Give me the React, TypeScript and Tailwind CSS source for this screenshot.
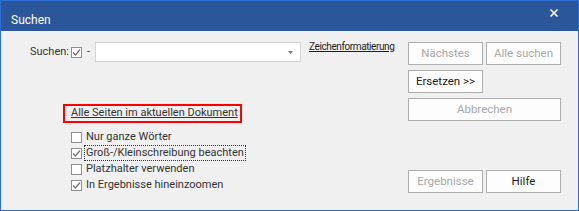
import React from "react";

const font = { fontFamily: 'Roboto, "Segoe UI", sans-serif' };

function Box({ checked }: { checked?: boolean }) {
  return (
    <span className="w-[11px] h-[11px] border border-[#8f8f8f] bg-white flex items-center justify-center shrink-0">
      {checked && (
        <svg width="9" height="9" viewBox="0 0 9 9">
          <path d="M1 4.5 L3.5 7 L8 1.5" fill="none" stroke="#707070" strokeWidth="1.2" />
        </svg>
      )}
    </span>
  );
}

function Btn({ label, disabled, wide }: { label: string; disabled?: boolean; wide?: boolean }) {
  return (
    <button
      className={`h-[23px] ${wide ? "w-[153px]" : "w-[75px]"} border border-[#adadad] bg-[#fdfdfd] text-[11.5px] whitespace-nowrap ${
        disabled ? "text-[#a8a8a8]" : "text-[#1e1e1e]"
      }`}
    >
      {label}
    </button>
  );
}

function Option({ label, checked, focus }: { label: string; checked?: boolean; focus?: boolean }) {
  return (
    <div className="flex items-center h-[16px] gap-[3px]">
      <Box checked={checked} />
      <span
        className={`leading-[14px] px-[1px] whitespace-nowrap ${focus ? "outline outline-1 outline-dotted outline-[#333]" : ""}`}
      >
        {label}
      </span>
    </div>
  );
}

export default function App() {
  return (
    <div className="w-[579px] h-[211px] flex flex-col bg-[#f0f0f0] text-[11px] text-[#1e1e1e]" style={font}>
      {/* title bar */}
      <div className="h-[31px] bg-[#2b579a] border-t border-x border-[#2b6fd6] flex justify-between text-white shrink-0">
        <span className="pl-[10px] pt-[10px] text-[12px]">Suchen</span>
        <svg width="10" height="10" viewBox="0 0 10 10" className="mt-[7px] mr-[19px]">
          <path d="M1.5 1.5 L8.5 8.5 M8.5 1.5 L1.5 8.5" stroke="#fff" strokeWidth="1.6" />
        </svg>
      </div>

      {/* body */}
      <div className="flex-1 flex border-x border-b border-[#2b6fd6]">
        <div className="flex-1 min-w-0 flex flex-col">
          <div className="flex items-start mt-[11px] whitespace-nowrap">
            <div className="flex items-center h-[20px] pl-[29px]">
              <span className="text-[#333]">Suchen:</span>
              <span className="ml-[2px]">
                <Box checked />
              </span>
              <span className="ml-[5px] text-[#333]">-</span>
              <div className="ml-[5px] w-[206px] h-[20px] border border-[#d5d5d5] bg-white flex items-center justify-end pr-[7px] shrink-0">
                <svg width="5" height="3" viewBox="0 0 5 3">
                  <path d="M0 0 L5 0 L2.5 3 Z" fill="#7a7a7a" />
                </svg>
              </div>
            </div>
            <span className="ml-[8px] -mt-[3px] text-[10px] tracking-[-0.4px] underline text-[#1e1e1e]">
              Zeichenformatierung
            </span>
          </div>

          <div className="ml-[62px] mt-[42px] w-[179px] h-[19px] border-2 border-[#ff0000] flex items-center pl-[6px]">
            <span className="underline text-[#333] whitespace-nowrap">Alle Seiten im aktuellen Dokument</span>
          </div>

          <div className="ml-[70px] mt-[6px] flex flex-col text-[#333]">
            <Option label="Nur ganze Wörter" />
            <Option label="Groß-/Kleinschreibung beachten" checked focus />
            <Option label="Platzhalter verwenden" />
            <Option label="In Ergebnisse hineinzoomen" checked />
          </div>
        </div>

        <div className="w-[153px] shrink-0 mr-[17px] pt-[11px] pb-[17px] flex flex-col gap-[5px]">
          <div className="flex gap-[3px]">
            <Btn label="Nächstes" disabled />
            <Btn label="Alle suchen" disabled />
          </div>
          <Btn label="Ersetzen >>" />
          <Btn label="Abbrechen" disabled wide />
          <div className="flex gap-[3px] mt-auto">
            <Btn label="Ergebnisse" disabled />
            <Btn label="Hilfe" />
          </div>
        </div>
      </div>
    </div>
  );
}
